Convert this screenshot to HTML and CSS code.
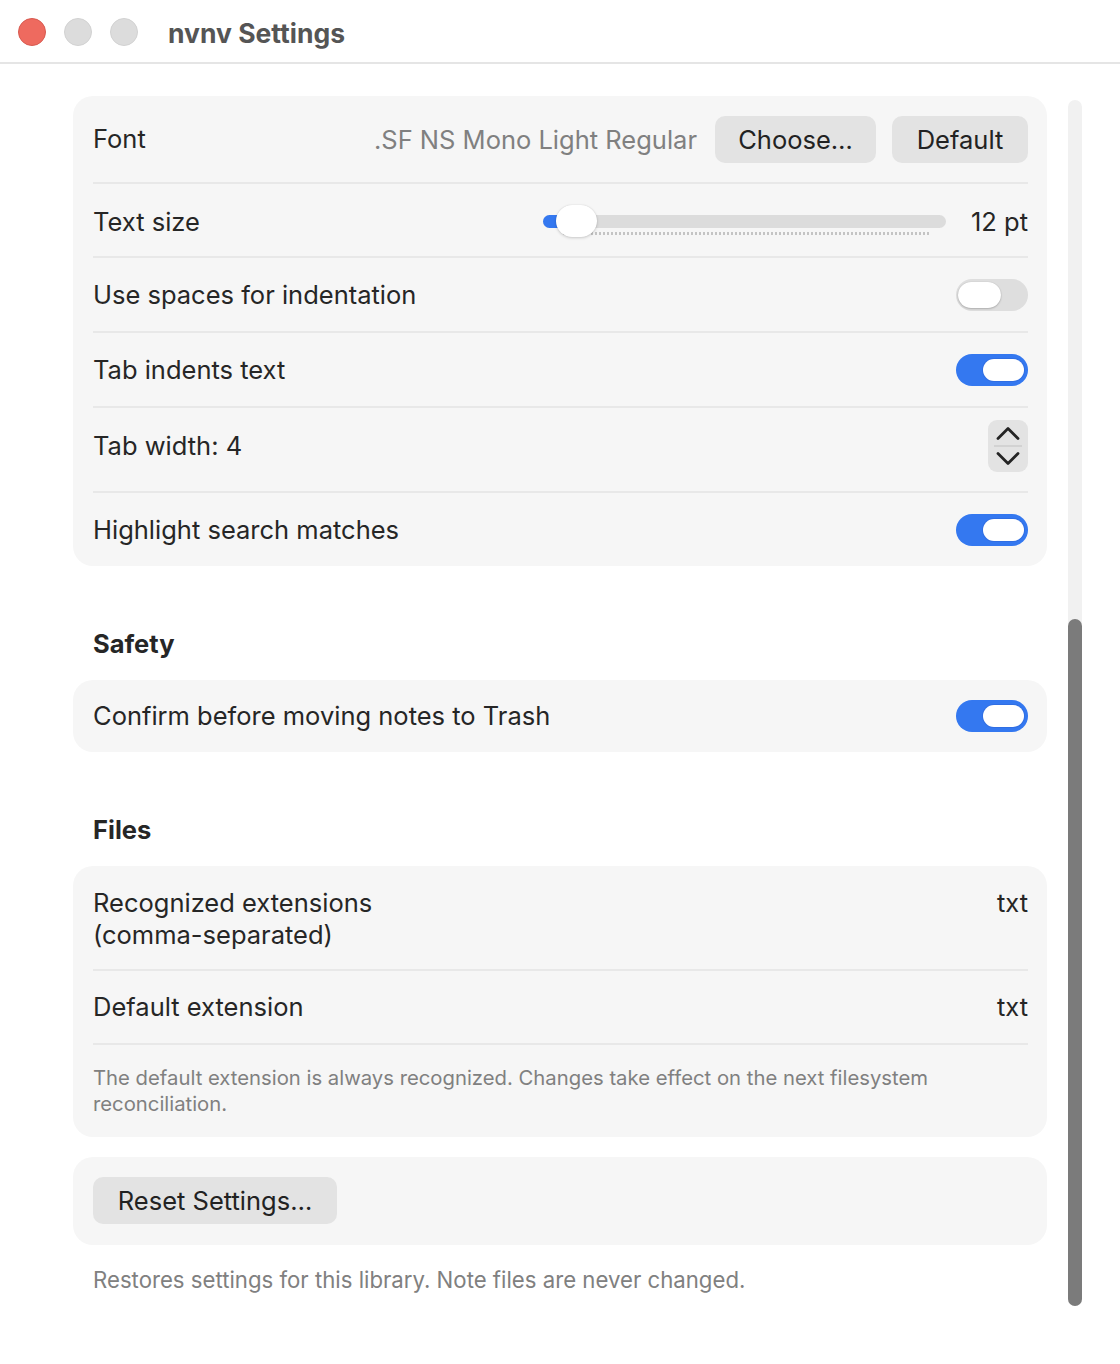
FILE: index.html
```html
<!DOCTYPE html>
<html lang="en">
<head>
<meta charset="utf-8">
<title>nvnv Settings</title>
<link rel="stylesheet" href="styles.css">
</head>
<body>
<div class="window">
  <header class="titlebar">
    <div class="lights">
      <span class="light close"></span>
      <span class="light idle"></span>
      <span class="light idle"></span>
    </div>
    <h1 class="title">nvnv Settings</h1>
  </header>

  <div class="body">
    <main class="content">
      <section class="card">
        <div class="row row-font">
          <span class="label">Font</span>
          <div class="controls">
            <span class="value-muted">.SF NS Mono Light Regular</span>
            <button class="btn btn-choose">Choose…</button>
            <button class="btn btn-default">Default</button>
          </div>
        </div>
        <div class="row row-size">
          <span class="label">Text size</span>
          <div class="controls">
            <div class="slider">
              <div class="slider-track"><div class="slider-fill"></div></div>
              <div class="slider-ticks"></div>
              <div class="slider-knob"></div>
            </div>
            <span class="value">12 pt</span>
          </div>
        </div>
        <div class="row row-toggle">
          <span class="label">Use spaces for indentation</span>
          <span class="toggle"><span class="knob"></span></span>
        </div>
        <div class="row row-toggle">
          <span class="label">Tab indents text</span>
          <span class="toggle on"><span class="knob"></span></span>
        </div>
        <div class="row row-stepper">
          <span class="label">Tab width: 4</span>
          <div class="stepper">
            <svg width="40" height="52" viewBox="0 0 40 52">
              <path d="M10 18.5 L20 8.5 L30 18.5" fill="none" stroke="#242424" stroke-width="2.8" stroke-linecap="round" stroke-linejoin="round"/>
              <line x1="6" y1="26" x2="34" y2="26" stroke="#d2d2d2" stroke-width="2"/>
              <path d="M10 33.5 L20 43.5 L30 33.5" fill="none" stroke="#242424" stroke-width="2.8" stroke-linecap="round" stroke-linejoin="round"/>
            </svg>
          </div>
        </div>
        <div class="row row-toggle last">
          <span class="label">Highlight search matches</span>
          <span class="toggle on"><span class="knob"></span></span>
        </div>
      </section>

      <h2 class="section-title">Safety</h2>
      <section class="card">
        <div class="row row-single last">
          <span class="label">Confirm before moving notes to Trash</span>
          <span class="toggle on"><span class="knob"></span></span>
        </div>
      </section>

      <h2 class="section-title">Files</h2>
      <section class="card">
        <div class="row row-top">
          <span class="label">Recognized extensions<br>(comma-separated)</span>
          <span class="value">txt</span>
        </div>
        <div class="row row-ext">
          <span class="label">Default extension</span>
          <span class="value">txt</span>
        </div>
        <p class="note">The default extension is always recognized. Changes take effect on the next filesystem reconciliation.</p>
      </section>

      <section class="card card-reset">
        <button class="btn btn-reset">Reset Settings…</button>
      </section>

      <p class="footnote">Restores settings for this library. Note files are never changed.</p>
    </main>

    <div class="scrollbar">
      <div class="scroll-thumb"></div>
    </div>
  </div>
</div>
</body>
</html>
```

FILE: styles.css
```css
* {
  box-sizing: border-box;
}

html, body {
  margin: 0;
  padding: 0;
  background: #ffffff;
}

body {
  font-family: Inter, "Noto Sans", "Liberation Sans", sans-serif;
  color: #262626;
  font-size: 25.5px;
  -webkit-font-smoothing: antialiased;
}

.window {
  width: 1120px;
  height: 1364px;
  display: flex;
  flex-direction: column;
}

/* Title bar */
.titlebar {
  height: 64px;
  flex: none;
  display: flex;
  align-items: center;
  border-bottom: 2px solid #e5e5e5;
  padding-left: 18px;
}

.lights {
  display: flex;
  gap: 18px;
  margin-top: 1px;
}

.light {
  width: 28px;
  height: 28px;
  border-radius: 50%;
  display: block;
}

.light.close {
  background: #ee6a5f;
  border: 1px solid #d85a50;
}

.light.idle {
  background: #dcdcdc;
  border: 1px solid #d2d2d2;
}

.title {
  margin: 3px 0 0 30px;
  font-size: 26.5px;
  font-weight: 700;
  color: #555555;
}

/* Body: scrolling content plus scroller */
.body {
  flex: 1;
  display: flex;
  align-items: flex-start;
}

.content {
  width: 974px;
  margin-left: 73px;
  padding-top: 32px;
  display: flex;
  flex-direction: column;
}

.card {
  background: #f6f6f6;
  border-radius: 20px;
  padding: 0 19px 0 20px;
}

.row {
  display: flex;
  align-items: center;
  justify-content: space-between;
  border-bottom: 2px solid #e8e8e8;
}

.row.last {
  border-bottom: none;
}

.label {
  line-height: 32px;
}

.value {
  line-height: 32px;
}

.value-muted {
  color: #808080;
  margin-right: 18px;
}

.controls {
  display: flex;
  align-items: center;
}

.row-font {
  height: 88px;
}

.row-size {
  height: 74px;
  padding-top: 3px;
}

.row-toggle {
  height: 75px;
}

.row-stepper {
  height: 85px;
  padding: 12px 0 20px;
}

.row-toggle.last {
  height: 73px;
}

.row-single {
  height: 72px;
}

.row-top {
  align-items: flex-start;
  padding: 21px 0 20px;
  height: 105px;
}

.row-ext {
  height: 74px;
}

/* Buttons */
.btn {
  font-family: inherit;
  font-size: 25.5px;
  color: #222222;
  background: #e3e3e3;
  border: none;
  border-radius: 10px;
  height: 47px;
  padding: 0;
}

.btn-choose {
  width: 161px;
}

.btn-default {
  width: 136px;
  margin-left: 16px;
}

.btn-reset {
  width: 244px;
}

/* Slider */
.slider {
  position: relative;
  width: 403px;
  height: 40px;
  margin-right: 25px;
}

.slider-track {
  position: absolute;
  left: 0;
  right: 0;
  top: 13px;
  height: 13px;
  border-radius: 7px;
  background: #dcdcdc;
  overflow: hidden;
}

.slider-fill {
  width: 26px;
  height: 100%;
  background: #3478f0;
}

.slider-ticks {
  position: absolute;
  left: 19px;
  width: 368px;
  top: 30px;
  height: 3px;
  background-image: radial-gradient(circle, #c4c4c4 1.2px, transparent 1.5px);
  background-size: 4px 3px;
}

.slider-knob {
  position: absolute;
  left: 13px;
  top: 3px;
  width: 41px;
  height: 32px;
  border-radius: 16px;
  background: #ffffff;
  box-shadow: 0 1px 3px rgba(0, 0, 0, 0.18), 0 0 1px rgba(0, 0, 0, 0.15);
}

/* Toggles */
.toggle {
  position: relative;
  width: 72px;
  height: 32px;
  border-radius: 16px;
  background: #dedede;
  flex: none;
  display: block;
}

.toggle .knob {
  position: absolute;
  top: 3px;
  left: 2px;
  width: 43px;
  height: 26px;
  border-radius: 13px;
  background: #ffffff;
  box-shadow: 0 1px 2px rgba(0, 0, 0, 0.2), 0 0 1px rgba(0, 0, 0, 0.2);
}

.toggle.on {
  background: #3478f0;
}

.toggle.on .knob {
  left: 27px;
  top: 5px;
  width: 41px;
  height: 22px;
  border-radius: 11px;
  box-shadow: 0 0 0 1px rgba(40, 90, 200, 0.3);
}

/* Stepper */
.stepper {
  width: 40px;
  height: 52px;
  border-radius: 9px;
  background: #e3e3e3;
}

.stepper svg {
  display: block;
}

/* Section headings */
.section-title {
  margin: 62px 0 20px 20px;
  font-size: 25.5px;
  font-weight: 700;
  line-height: 32px;
  color: #262626;
}

.note {
  margin: 0;
  padding: 20px 0 20px;
  font-size: 20.3px;
  line-height: 26px;
  color: #808080;
}

.card-reset {
  margin-top: 20px;
  padding-top: 20px;
  padding-bottom: 21px;
}

.footnote {
  margin: 21px 0 0 20px;
  font-size: 22.2px;
  line-height: 28px;
  color: #808080;
}

/* Scroller */
.scrollbar {
  margin-left: 21px;
  margin-top: 36px;
  width: 14px;
  height: 1206px;
  border-radius: 7px;
  background: #f1f1f1;
  display: flex;
  flex-direction: column;
  justify-content: flex-end;
}

.scroll-thumb {
  height: 687px;
  border-radius: 7px;
  background: #7b7b7b;
}
```
